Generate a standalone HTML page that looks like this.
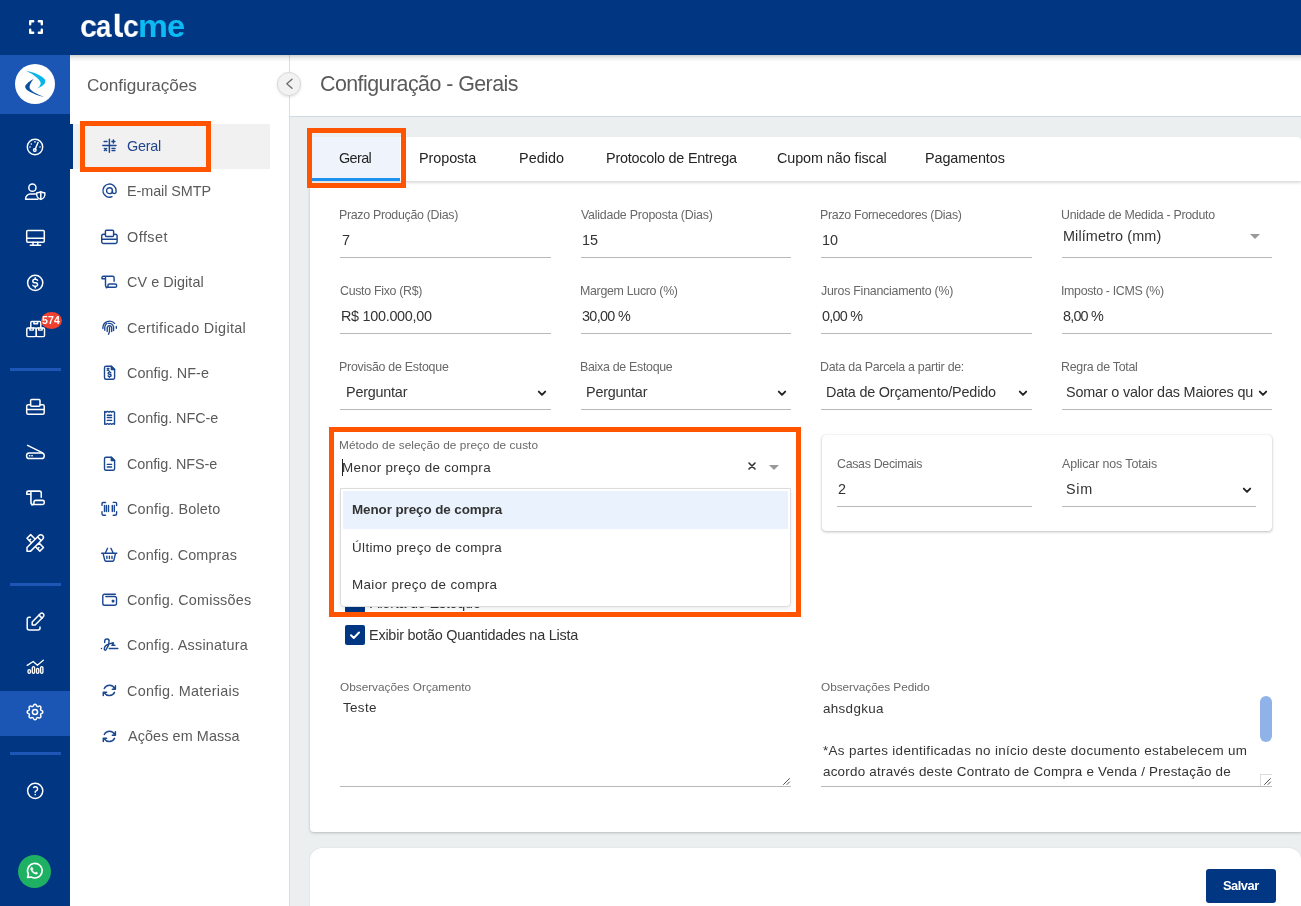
<!DOCTYPE html>
<html><head><meta charset="utf-8">
<style>
*{box-sizing:border-box;margin:0;padding:0}
html,body{width:1301px;height:906px;overflow:hidden;background:#ebeff0;font-family:"Liberation Sans",sans-serif;position:relative}
.a{position:absolute}
.t{position:absolute;white-space:nowrap;line-height:1;will-change:transform}
svg.a{overflow:visible}
</style></head>
<body>
<div class="a" style="left:0px;top:0px;width:1301px;height:55px;background:#003682;z-index:5"></div>
<div class="a" style="left:0px;top:55px;width:70px;height:851px;background:#003682;z-index:4"></div>
<div class="a" style="left:70px;top:55px;width:1231px;height:7px;background:linear-gradient(rgba(0,0,0,.19),rgba(0,0,0,.06) 45%,rgba(0,0,0,0));z-index:6"></div>
<div class="a" style="left:0px;top:55px;width:70px;height:59px;background:#1c56b5;z-index:4"></div>
<div class="a" style="left:0px;top:691px;width:70px;height:45px;background:#1c56b5;z-index:4"></div>
<div class="a" style="left:10px;top:368px;width:51px;height:3px;background:#1d56b4;z-index:4"></div>
<div class="a" style="left:10px;top:583px;width:51px;height:3px;background:#1d56b4;z-index:4"></div>
<div class="a" style="left:10px;top:752px;width:51px;height:3px;background:#1d56b4;z-index:4"></div>
<div class="a" style="left:70px;top:55px;width:220px;height:851px;background:#fff;z-index:3;border-right:1px solid #dcdcdc"></div>
<div class="a" style="left:290px;top:55px;width:1011px;height:62px;background:#fff;border-bottom:1px solid #cfdbe3"></div>
<svg class="a" style="left:28.8px;top:20px;z-index:6" width="14" height="14" viewBox="0 0 14 14" fill="none" stroke="#fff" stroke-width="2.4" stroke-linecap="round" stroke-linejoin="round"><path d="M1.2 4.2V1.2h3M9.8 1.2h3v3M12.8 9.8v3h-3M4.2 12.8h-3v-3"/></svg>
<svg class="a" style="left:0;top:0;z-index:6" width="200" height="50" viewBox="0 0 200 50"><path d="M114.8 13.8H119.5V30.8Q119.5 32.8 121.3 32.8H122.9V37.1H121Q114.8 37.1 114.8 30.8Z" fill="#fff"/></svg>
<div class="t" style="left:79.98px;top:11px;font-size:31.5px;font-weight:bold;color:#fff;transform:scaleX(0.969);transform-origin:0 0;z-index:6">c</div>
<div class="t" style="left:95.58px;top:11px;font-size:31.5px;font-weight:bold;color:#fff;transform:scaleX(0.872);transform-origin:0 0;z-index:6">a</div>
<div class="t" style="left:122.86px;top:11px;font-size:31.5px;font-weight:bold;color:#fff;transform:scaleX(0.903);transform-origin:0 0;z-index:6">c</div>
<div class="t" style="left:138.42px;top:11px;font-size:31.5px;font-weight:bold;color:#0cbaf4;transform:scaleX(1.067);transform-origin:0 0;z-index:6">m</div>
<div class="t" style="left:166.69px;top:11px;font-size:31.5px;font-weight:bold;color:#0cbaf4;transform:scaleX(1.038);transform-origin:0 0;z-index:6">e</div>
<div class="a" style="left:15px;top:64px;width:40px;height:40px;border-radius:50%;background:#fff;z-index:6"></div>
<svg class="a" style="left:15px;top:64px;z-index:7" width="40" height="40" viewBox="0 0 40 40"><path d="M10.5 6.5C18 8 26 11 29.5 15C31.5 17.5 30.5 21 22.1 24.6C26 21.5 26.5 19 24.5 16.5C22 13 16 9 10.5 6.5Z" fill="#0bb4e8"/><path d="M18.6 15C13 18 10 21 10.2 23C10.5 26 17 30 29.4 33.1C20 29.5 15.5 26.5 14.6 24C14.1 21.5 16 18 18.6 15Z" fill="#0a4fa0"/></svg>
<svg class="a" style="left:23.4px;top:134.8px;z-index:6" width="24" height="24" viewBox="0 0 24 24" fill="none" stroke="#fff" stroke-width="1.45" stroke-linecap="round" stroke-linejoin="round"><circle cx="12" cy="12" r="7.7"/><circle cx="11.8" cy="15.1" r="1.3"/><path d="M12.4 13.8L15 7.4"/><circle cx="8.3" cy="9" r=".8" fill="#fff" stroke="none"/><circle cx="12" cy="6.9" r=".8" fill="#fff" stroke="none"/><circle cx="7" cy="12" r=".8" fill="#fff" stroke="none"/><circle cx="17" cy="12" r=".8" fill="#fff" stroke="none"/></svg>
<svg class="a" style="left:23px;top:180px;z-index:6" width="24" height="24" viewBox="0 0 24 24" fill="none" stroke="#fff" stroke-width="1.5" stroke-linecap="round" stroke-linejoin="round"><circle cx="9.4" cy="7.7" r="3.6"/><path d="M12.6 14.1H7.3a4.7 4.7 0 0 0-4.7 4.7v.4h12.2"/><path d="M17.8 11.6c1.2.9 2.6 1.3 4 1.2c.6 3-1 5.8-4 6.6c-3-.8-4.6-3.6-4-6.6c1.4.1 2.8-.3 4-1.2z"/><path d="M17.8 12v7.2"/></svg>
<svg class="a" style="left:23px;top:226px;z-index:6" width="24" height="24" viewBox="0 0 24 24" fill="none" stroke="#fff" stroke-width="1.5" stroke-linecap="round" stroke-linejoin="round"><rect x="3.7" y="4.4" width="17.6" height="11.9" rx="1.2"/><path d="M3.7 12.3h17.6M10 16.3v2.9M14.7 16.3v2.9M7.3 19.3h10.3"/></svg>
<svg class="a" style="left:23px;top:271px;z-index:6" width="24" height="24" viewBox="0 0 24 24" fill="none" stroke="#fff" stroke-width="1.5" stroke-linecap="round" stroke-linejoin="round"><circle cx="12.2" cy="11.8" r="7.6"/><path d="M14.5 9.2a1.9 1.6 0 0 0-1.7-1h-1.2a1.75 1.75 0 0 0 0 3.5h1.2a1.75 1.75 0 0 1 0 3.5h-1.2a1.9 1.6 0 0 1-1.7-1M12.2 6.8v1.4M12.2 15.2v1.5"/></svg>
<svg class="a" style="left:23px;top:317px;z-index:6" width="24" height="24" viewBox="0 0 24 24" fill="none" stroke="#fff" stroke-width="1.45" stroke-linecap="round" stroke-linejoin="round"><path d="M7.8 10.8V5.4a.9.9 0 0 1 .9-.9h8.2a.9.9 0 0 1 .9.9v5.4M10.9 4.6v2.2h3.6V4.6"/><rect x="3.8" y="11" width="9.5" height="8.6" rx="1"/><rect x="13.3" y="11" width="8.2" height="8.6" rx="1"/><path d="M6.9 11v2.1h3.4V11M15.7 11v2.1h3.4V11"/></svg>
<div class="a" style="left:41px;top:312px;width:21px;height:17px;border-radius:50%;background:#ef4030;z-index:7"></div>
<div class="t" style="left:42.17px;top:315.00px;font-size:10.6px;color:#fff;letter-spacing:0.092px;font-weight:bold;z-index:8">574</div>
<svg class="a" style="left:23px;top:395px;z-index:6" width="24" height="24" viewBox="0 0 24 24" fill="none" stroke="#fff" stroke-width="1.5" stroke-linecap="round" stroke-linejoin="round"><rect x="7.6" y="4.6" width="9.4" height="6.7" rx="1"/><path d="M7.6 9.8H5.2a1.5 1.5 0 0 0-1.5 1.5v6.5a1.5 1.5 0 0 0 1.5 1.5h14.5a1.5 1.5 0 0 0 1.5-1.5v-6.5a1.5 1.5 0 0 0-1.5-1.5H17M3.7 14.5h17.5"/></svg>
<svg class="a" style="left:23px;top:440px;z-index:6" width="24" height="24" viewBox="0 0 24 24" fill="none" stroke="#fff" stroke-width="1.5" stroke-linecap="round" stroke-linejoin="round"><path d="M4.6 5.4l14.6 7.3"/><rect x="3.6" y="13" width="17.6" height="5.6" rx="2.6"/><path d="M6.5 15.8h.3M8.9 15.8h.3"/></svg>
<svg class="a" style="left:23px;top:486px;z-index:6" width="24" height="24" viewBox="0 0 24 24" fill="none" stroke="#fff" stroke-width="1.3" stroke-linecap="round" stroke-linejoin="round"><g transform="translate(12.5 11.8) scale(1.2) translate(-11.3 -11.75)"><path d="M4 8.8V7.6a1.4 1.4 0 0 1 1.4-1.4h9.2a1.5 1.5 0 0 1 1.5 1.5v3.6M7.5 7.4v8.2a1.7 1.7 0 0 0 1.7 1.7h8a1.4 1.4 0 0 0 1.4-1.4v-.6a1.4 1.4 0 0 0-1.4-1.4h-5.8a1.4 1.4 0 0 0-1.4 1.4v.7a1.7 1.7 0 0 1-1.7 1.7M4 8.8h3.4"/></g></svg>
<svg class="a" style="left:23px;top:531px;z-index:6" width="24" height="24" viewBox="0 0 24 24" fill="none" stroke="#fff" stroke-width="1.65" stroke-linecap="round" stroke-linejoin="round"><g transform="translate(12.25 11.9) scale(0.917) translate(-12 -12)"><path d="M3 21h4l13-13a1.5 1.5 0 0 0-4-4l-13 13v4M14.5 5.5l4 4M12 8l-5-5-4 4 5 5M7 8l-1.5 1.5M16 12l5 5-4 4-5-5M16 17l-1.5 1.5"/></g></svg>
<svg class="a" style="left:23px;top:610px;z-index:6" width="24" height="24" viewBox="0 0 24 24" fill="none" stroke="#fff" stroke-width="1.5" stroke-linecap="round" stroke-linejoin="round"><path d="M7.3 7.2H6.2a2 2 0 0 0-2 2v8.7a2 2 0 0 0 2 2h8.8a2 2 0 0 0 2-2v-1"/><path d="M20.3 6.8a2.1 2.1 0 0 0-3-3L9.2 12v3h3z"/><path d="M16 5.1l3 3"/></svg>
<svg class="a" style="left:23px;top:655px;z-index:6" width="24" height="24" viewBox="0 0 24 24" fill="none" stroke="#fff" stroke-width="1.35" stroke-linecap="round" stroke-linejoin="round"><path d="M4.2 10.4L10.2 6.5l4.2 3.8 5.9-5"/><rect x="5" y="14.6" width="2.4" height="3.7" rx="1.2"/><rect x="9.3" y="11.6" width="2.3" height="6.7" rx="1.15"/><rect x="13.5" y="13.3" width="2.3" height="5" rx="1.15"/><rect x="17.6" y="11.6" width="2.3" height="6.7" rx="1.15"/></svg>
<svg class="a" style="left:23px;top:700px;z-index:6" width="24" height="24" viewBox="0 0 24 24" fill="none" stroke="#fff" stroke-width="1.75" stroke-linecap="round" stroke-linejoin="round"><g transform="translate(12 12) scale(0.86) translate(-12 -12)"><path d="M10.3 4.3c.4-1.8 3-1.8 3.4 0a1.7 1.7 0 0 0 2.6 1.1c1.5-.9 3.3.8 2.4 2.4a1.7 1.7 0 0 0 1 2.5c1.9.4 1.9 3 0 3.4a1.7 1.7 0 0 0-1 2.6c.9 1.5-.9 3.3-2.4 2.4a1.7 1.7 0 0 0-2.6 1c-.4 1.9-3 1.9-3.4 0a1.7 1.7 0 0 0-2.6-1c-1.5.9-3.3-.9-2.4-2.4a1.7 1.7 0 0 0-1-2.6c-1.9-.4-1.9-3 0-3.4a1.7 1.7 0 0 0 1-2.5c-.9-1.6.9-3.3 2.4-2.4 1 .6 2.3.1 2.6-1.1z"/><circle cx="12" cy="12" r="3"/></g></svg>
<svg class="a" style="left:23px;top:779px;z-index:6" width="24" height="24" viewBox="0 0 24 24" fill="none" stroke="#fff" stroke-width="1.5" stroke-linecap="round" stroke-linejoin="round"><circle cx="12.2" cy="11.8" r="7.6"/><path d="M12.2 15.6v.05M12.2 13.2a1.3 1.3 0 0 1 .9-1.3a2.2 2.2 0 1 0-2.5-3.4"/></svg>
<div class="a" style="left:17.7px;top:854.9px;width:33px;height:33px;border-radius:50%;background:#1eb164;z-index:6"></div>
<svg class="a" style="left:22.2px;top:859.4px;z-index:7" width="24" height="24" viewBox="0 0 24 24" fill="none" stroke="#fff" stroke-width="1.6" stroke-linecap="round" stroke-linejoin="round"><path d="M5.5 18.5l1-3.2A7.3 7.3 0 1 1 9.2 18z" stroke-width="1.6"/><path d="M9.3 8.4c-.4.3-.8.9-.6 1.8.5 2 2.6 4.3 4.9 4.9.9.2 1.5-.2 1.8-.6l.2-.6-1.7-.9-.8.8c-1-.4-2.4-1.7-2.8-2.8l.8-.8-.9-1.7z" fill="#fff" stroke="#fff" stroke-width=".6"/></svg>
<div class="t" style="left:87.40px;top:77.00px;font-size:17.2px;color:#5c5c5c;letter-spacing:-0.078px;z-index:4">Configurações</div>
<div class="a" style="left:276.5px;top:72px;width:24px;height:24px;border-radius:50%;background:#f2f2f2;border:1px solid #dadada;box-shadow:0 1px 3px rgba(0,0,0,.12);z-index:6"></div>
<svg class="a" style="left:282.5px;top:78px;z-index:7" width="12" height="12" viewBox="0 0 12 12" fill="none" stroke="#6e6e6e" stroke-width="1.4" stroke-linecap="round" stroke-linejoin="round"><path d="M9 1.2L3.8 5.7 9 10.2"/></svg>
<div class="a" style="left:70px;top:124px;width:200px;height:45px;background:#f1f1f1;z-index:4"></div>
<div class="a" style="left:70px;top:124px;width:3px;height:45px;background:#003682;z-index:5"></div>
<div class="t" style="left:127.04px;top:139.00px;font-size:14.4px;color:#22468e;letter-spacing:-0.225px;z-index:5">Geral</div>
<div class="t" style="left:126.59px;top:184.00px;font-size:14.4px;color:#5a5a5a;letter-spacing:-0.072px;z-index:5">E-mail SMTP</div>
<div class="t" style="left:127.06px;top:230.00px;font-size:14.4px;color:#5a5a5a;letter-spacing:0.476px;z-index:5">Offset</div>
<div class="t" style="left:127.02px;top:275.00px;font-size:14.4px;color:#5a5a5a;letter-spacing:0.060px;z-index:5">CV e Digital</div>
<div class="t" style="left:127.02px;top:321.00px;font-size:14.4px;color:#5a5a5a;letter-spacing:0.335px;z-index:5">Certificado Digital</div>
<div class="t" style="left:127.02px;top:366.00px;font-size:14.4px;color:#5a5a5a;letter-spacing:0.030px;z-index:5">Config. NF-e</div>
<div class="t" style="left:127.02px;top:411.00px;font-size:14.4px;color:#5a5a5a;letter-spacing:-0.064px;z-index:5">Config. NFC-e</div>
<div class="t" style="left:127.02px;top:457.00px;font-size:14.4px;color:#5a5a5a;letter-spacing:-0.069px;z-index:5">Config. NFS-e</div>
<div class="t" style="left:127.02px;top:502.00px;font-size:14.4px;color:#5a5a5a;letter-spacing:0.224px;z-index:5">Config. Boleto</div>
<div class="t" style="left:127.02px;top:548.00px;font-size:14.4px;color:#5a5a5a;letter-spacing:0.133px;z-index:5">Config. Compras</div>
<div class="t" style="left:127.02px;top:593.00px;font-size:14.4px;color:#5a5a5a;letter-spacing:0.209px;z-index:5">Config. Comissões</div>
<div class="t" style="left:127.02px;top:638.00px;font-size:14.4px;color:#5a5a5a;letter-spacing:0.237px;z-index:5">Config. Assinatura</div>
<div class="t" style="left:127.02px;top:684.00px;font-size:14.4px;color:#5a5a5a;letter-spacing:0.260px;z-index:5">Config. Materiais</div>
<div class="t" style="left:127.55px;top:729.00px;font-size:14.4px;color:#5a5a5a;letter-spacing:0.093px;z-index:5">Ações em Massa</div>
<svg class="a" style="left:98px;top:134px;z-index:5" width="24" height="24" viewBox="0 0 24 24" fill="none" stroke="#1b4791" stroke-width="1.45" stroke-linecap="round" stroke-linejoin="round"><path d="M11.4 5.3v13M4.8 11.5H18M6.1 7.5H9M13.9 7.5h3M15.4 6v3M6.4 14.4l2.2 2.2M8.6 14.4l-2.2 2.2M14 14.4h3M14 16.6h3"/></svg>
<svg class="a" style="left:98px;top:179px;z-index:5" width="24" height="24" viewBox="0 0 24 24" fill="none" stroke="#1b4791" stroke-width="1.9" stroke-linecap="round" stroke-linejoin="round"><g transform="translate(11.5 11.65) scale(0.733) translate(-12 -12)"><circle cx="12" cy="12" r="4"/><path d="M16 12v1.5a2.5 2.5 0 0 0 5 0V12a9 9 0 1 0-5.5 8.28"/></g></svg>
<svg class="a" style="left:98px;top:225px;z-index:5" width="24" height="24" viewBox="0 0 24 24" fill="none" stroke="#1b4791" stroke-width="1.45" stroke-linecap="round" stroke-linejoin="round"><rect x="7.4" y="5.2" width="8.2" height="6.2" rx="1"/><path d="M7.4 9.2H5.5a1.8 1.8 0 0 0-1.8 1.8v5.7a1.8 1.8 0 0 0 1.8 1.8h11.8a1.8 1.8 0 0 0 1.8-1.8V11a1.8 1.8 0 0 0-1.8-1.8h-1.7M3.7 14.3h15.4"/></svg>
<svg class="a" style="left:98px;top:270px;z-index:5" width="24" height="24" viewBox="0 0 24 24" fill="none" stroke="#1b4791" stroke-width="1.45" stroke-linecap="round" stroke-linejoin="round"><path d="M4 8.8V7.6a1.4 1.4 0 0 1 1.4-1.4h9.2a1.5 1.5 0 0 1 1.5 1.5v3.6M7.5 7.4v8.2a1.7 1.7 0 0 0 1.7 1.7h8a1.4 1.4 0 0 0 1.4-1.4v-.6a1.4 1.4 0 0 0-1.4-1.4h-5.8a1.4 1.4 0 0 0-1.4 1.4v.7a1.7 1.7 0 0 1-1.7 1.7M4 8.8h3.4"/></svg>
<svg class="a" style="left:98px;top:316px;z-index:5" width="24" height="24" viewBox="0 0 24 24" fill="none" stroke="#1b4791" stroke-width="1.35" stroke-linecap="round" stroke-linejoin="round"><path d="M4.9 12.5v-.7a6.7 6.7 0 0 1 11.7-4.4M18.3 10.3v2M6.8 14.3v-3.1a4.6 4.6 0 0 1 1.7-3.5M10.2 7.4a4.6 4.6 0 0 1 5.4 3.6v3.6M9.2 15.4v-3.8a2.3 2.3 0 0 1 4.5 0v3.9M11.5 11.5v4l-1 2.7"/></svg>
<svg class="a" style="left:98px;top:361px;z-index:5" width="24" height="24" viewBox="0 0 24 24" fill="none" stroke="#1b4791" stroke-width="1.4" stroke-linecap="round" stroke-linejoin="round"><path d="M13.3 5.2H8a1.5 1.5 0 0 0-1.5 1.5v10.1A1.5 1.5 0 0 0 8 18.3h7.1a1.5 1.5 0 0 0 1.5-1.5V8.5z"/><path d="M13.3 5.2v3.3h3.3z" fill="#1b4791"/><path d="M9.2 7.5h1.7M9.2 9.3h1.7M12.8 11.8a1.2 1 0 0 0-1.2-.7h-.4a1.1 1.1 0 0 0 0 2.2h.8a1.1 1.1 0 0 1 0 2.2h-.6a1.2 1 0 0 1-1.3-.7M11.4 10.4v.7M11.4 15.5v.7"/></svg>
<svg class="a" style="left:98px;top:406px;z-index:5" width="24" height="24" viewBox="0 0 24 24" fill="none" stroke="#1b4791" stroke-width="1.4" stroke-linecap="round" stroke-linejoin="round"><path d="M6.7 18.3V5.4l1.4.8 1.4-.8 1.4.8 1.4-.8 1.4.8 1.4-.8 1.4.8V18.3l-1.4-.8-1.4.8-1.4-.8-1.4.8-1.4-.8-1.4.8-1.4-.8z"/><path d="M9.3 9.3h4.3M9.3 11.5h4.3M9.3 14.4h4.3"/></svg>
<svg class="a" style="left:98px;top:452px;z-index:5" width="24" height="24" viewBox="0 0 24 24" fill="none" stroke="#1b4791" stroke-width="1.4" stroke-linecap="round" stroke-linejoin="round"><path d="M13.3 5.2H8a1.5 1.5 0 0 0-1.5 1.5v10.1A1.5 1.5 0 0 0 8 18.3h7.1a1.5 1.5 0 0 0 1.5-1.5V8.5z"/><path d="M13.3 5.2v3.3h3.3z" fill="#1b4791"/><path d="M9.3 12.4h4.3M9.3 15h4.3"/></svg>
<svg class="a" style="left:98px;top:497px;z-index:5" width="24" height="24" viewBox="0 0 24 24" fill="none" stroke="#1b4791" stroke-width="1.4" stroke-linecap="round" stroke-linejoin="round"><path d="M4 8.4V6.5a1 1 0 0 1 1-1h2.5M15.2 5.4h2.4a1 1 0 0 1 1 1v2.1M4 14.6v2.2a1.5 1.5 0 0 0 1.5 1.5h2M18.6 14.6v2.2a1.5 1.5 0 0 1-1.5 1.5h-1.9M6.5 8.5v6M8.4 8.5v6M10.5 8.5v6M14.3 8.5v6M16.3 8.5v6"/></svg>
<svg class="a" style="left:98px;top:543px;z-index:5" width="24" height="24" viewBox="0 0 24 24" fill="none" stroke="#1b4791" stroke-width="1.4" stroke-linecap="round" stroke-linejoin="round"><path d="M3.7 10.3h15.1M7.4 9.8l2.2-4.5M15.1 9.8l-2.2-4.5M5.2 10.8l1.5 6.2a1.5 1.5 0 0 0 1.4 1.2h6.4a1.5 1.5 0 0 0 1.4-1.2l1.5-6.2M8.9 13.1v2.5M11.4 13.1v2.5M14 13.1v2.5"/></svg>
<svg class="a" style="left:98px;top:588px;z-index:5" width="24" height="24" viewBox="0 0 24 24" fill="none" stroke="#1b4791" stroke-width="1.4" stroke-linecap="round" stroke-linejoin="round"><path d="M17.4 6.3H6.5a1.7 1.7 0 0 0-1.7 1.7v7.5a1.8 1.8 0 0 0 1.8 1.8h10.1a1.8 1.8 0 0 0 1.8-1.8v-5.2a1.8 1.8 0 0 0-1.8-1.8H7.8"/><rect x="14.4" y="12.4" width="1.3" height="1.3" fill="#1b4791"/></svg>
<svg class="a" style="left:98px;top:633px;z-index:5" width="24" height="24" viewBox="0 0 24 24" fill="none" stroke="#1b4791" stroke-width="1.4" stroke-linecap="round" stroke-linejoin="round"><path d="M6.7 9.5V8a2.2 2.2 0 0 1 4.4.3c0 3-1.5 6.5-3 8.3-.8 1-1.8.7-1.8-.5 0-2.4 2-4.3 4.5-4.9 1.8-.5 3.3-1.5 4.4-1.5.5 0 .2 1.4-1.3 2.6h3M11.3 15.5h8.5M3.4 15.5h.1"/></svg>
<svg class="a" style="left:98px;top:679px;z-index:5" width="24" height="24" viewBox="0 0 24 24" fill="none" stroke="#1b4791" stroke-width="1.5" stroke-linecap="round" stroke-linejoin="round"><path d="M6.3 9.5a5.8 5.8 0 0 1 10.4.2M17.4 6.8v3.5h-3.1M16.5 13.3a5.8 5.8 0 0 1-10 .7M5.3 16.5v-3.2h3.3"/></svg>
<svg class="a" style="left:98px;top:724.5px;z-index:5" width="24" height="24" viewBox="0 0 24 24" fill="none" stroke="#1b4791" stroke-width="1.5" stroke-linecap="round" stroke-linejoin="round"><path d="M6.3 9.5a5.8 5.8 0 0 1 10.4.2M17.4 6.8v3.5h-3.1M16.5 13.3a5.8 5.8 0 0 1-10 .7M5.3 16.5v-3.2h3.3"/></svg>
<div class="a" style="left:80px;top:121px;width:131px;height:51px;border:5px solid #ff5400;z-index:20"></div>
<div class="t" style="left:319.95px;top:74.00px;font-size:21.4px;color:#5a5a5a;letter-spacing:-0.540px;z-index:2">Configuração - Gerais</div>
<div class="a" style="left:310px;top:137px;width:991px;height:44px;background:#fff;border-radius:4px 4px 0 0;box-shadow:0 2px 3px rgba(0,0,0,.14);z-index:2"></div>
<div class="a" style="left:310px;top:181px;width:993px;height:651px;background:#fff;border-radius:0 0 4px 4px;box-shadow:0 1px 3px rgba(0,0,0,.22)"></div>
<div class="a" style="left:310px;top:848px;width:991px;height:70px;background:#fff;border-radius:12px;box-shadow:0 0 2px rgba(0,0,0,.1)"></div>
<div class="a" style="left:312px;top:137px;width:88px;height:44px;background:#eff4fc;z-index:3"></div>
<div class="a" style="left:312px;top:178px;width:88px;height:3px;background:#1e90f0;z-index:3"></div>
<div class="t" style="left:339.04px;top:151.00px;font-size:14.4px;color:#242424;letter-spacing:-0.600px;z-index:4">Geral</div>
<div class="t" style="left:418.99px;top:151.00px;font-size:14.4px;color:#242424;letter-spacing:-0.062px;z-index:4">Proposta</div>
<div class="t" style="left:519.19px;top:151.00px;font-size:14.4px;color:#242424;letter-spacing:0.032px;z-index:4">Pedido</div>
<div class="t" style="left:605.79px;top:151.00px;font-size:14.4px;color:#242424;letter-spacing:-0.223px;z-index:4">Protocolo de Entrega</div>
<div class="t" style="left:776.82px;top:151.00px;font-size:14.4px;color:#242424;letter-spacing:-0.092px;z-index:4">Cupom não fiscal</div>
<div class="t" style="left:925.19px;top:151.00px;font-size:14.4px;color:#242424;letter-spacing:-0.106px;z-index:4">Pagamentos</div>
<div class="a" style="left:307px;top:128px;width:99px;height:60px;border:5px solid #ff5400;z-index:20"></div>
<div class="t" style="left:339.48px;top:209.00px;font-size:12.4px;color:#686868;letter-spacing:-0.303px;z-index:3">Prazo Produção (Dias)</div>
<div class="t" style="left:580.74px;top:209.00px;font-size:12.4px;color:#686868;letter-spacing:-0.220px;z-index:3">Validade Proposta (Dias)</div>
<div class="t" style="left:820.18px;top:209.00px;font-size:12.4px;color:#686868;letter-spacing:-0.283px;z-index:3">Prazo Fornecedores (Dias)</div>
<div class="t" style="left:1060.80px;top:209.00px;font-size:12.4px;color:#686868;letter-spacing:-0.301px;z-index:3">Unidade de Medida - Produto</div>
<div class="t" style="left:341.76px;top:233.00px;font-size:14.4px;color:#333333;letter-spacing:0.000px;z-index:3">7</div>
<div class="t" style="left:582.09px;top:233.00px;font-size:14.4px;color:#333333;letter-spacing:0.000px;z-index:3">15</div>
<div class="t" style="left:821.89px;top:233.00px;font-size:14.4px;color:#333333;letter-spacing:0.000px;z-index:3">10</div>
<div class="t" style="left:1062.59px;top:229.00px;font-size:14.4px;color:#333333;letter-spacing:0.116px;z-index:3">Milímetro (mm)</div>
<svg class="a" style="left:1250px;top:234px;z-index:4" width="10" height="10" viewBox="0 0 10 10" fill="none" stroke="none" stroke-width="2" stroke-linecap="round" stroke-linejoin="round"><path d="M0 0h10L5 5z" fill="#999" stroke="none"/></svg>
<div class="a" style="left:340px;top:257px;width:211px;height:1px;background:#b8b8b8;z-index:3"></div>
<div class="a" style="left:581px;top:257px;width:210px;height:1px;background:#b8b8b8;z-index:3"></div>
<div class="a" style="left:821px;top:257px;width:211px;height:1px;background:#b8b8b8;z-index:3"></div>
<div class="a" style="left:1062px;top:257px;width:210px;height:1px;background:#b8b8b8;z-index:3"></div>
<div class="t" style="left:339.84px;top:285.00px;font-size:12.4px;color:#686868;letter-spacing:-0.312px;z-index:3">Custo Fixo (R$)</div>
<div class="t" style="left:579.98px;top:285.00px;font-size:12.4px;color:#686868;letter-spacing:-0.307px;z-index:3">Margem Lucro (%)</div>
<div class="t" style="left:820.64px;top:285.00px;font-size:12.4px;color:#686868;letter-spacing:-0.242px;z-index:3">Juros Financiamento (%)</div>
<div class="t" style="left:1060.64px;top:285.00px;font-size:12.4px;color:#686868;letter-spacing:-0.339px;z-index:3">Imposto - ICMS (%)</div>
<div class="t" style="left:340.79px;top:309.00px;font-size:14.4px;color:#333333;letter-spacing:-0.286px;z-index:3">R$ 100.000,00</div>
<div class="t" style="left:581.87px;top:309.00px;font-size:14.4px;color:#333333;letter-spacing:-0.682px;z-index:3">30,00 %</div>
<div class="t" style="left:822.38px;top:309.00px;font-size:14.4px;color:#333333;letter-spacing:-0.729px;z-index:3">0,00 %</div>
<div class="t" style="left:1063.11px;top:309.00px;font-size:14.4px;color:#333333;letter-spacing:-0.797px;z-index:3">8,00 %</div>
<div class="a" style="left:340px;top:333px;width:211px;height:1px;background:#b8b8b8;z-index:3"></div>
<div class="a" style="left:581px;top:333px;width:210px;height:1px;background:#b8b8b8;z-index:3"></div>
<div class="a" style="left:821px;top:333px;width:211px;height:1px;background:#b8b8b8;z-index:3"></div>
<div class="a" style="left:1062px;top:333px;width:210px;height:1px;background:#b8b8b8;z-index:3"></div>
<div class="t" style="left:339.48px;top:361.00px;font-size:12.4px;color:#686868;letter-spacing:-0.253px;z-index:3">Provisão de Estoque</div>
<div class="t" style="left:579.98px;top:361.00px;font-size:12.4px;color:#686868;letter-spacing:-0.293px;z-index:3">Baixa de Estoque</div>
<div class="t" style="left:820.18px;top:361.00px;font-size:12.4px;color:#686868;letter-spacing:-0.267px;z-index:3">Data da Parcela a partir de:</div>
<div class="t" style="left:1060.78px;top:361.00px;font-size:12.4px;color:#686868;letter-spacing:-0.272px;z-index:3">Regra de Total</div>
<div class="t" style="left:345.59px;top:385.00px;font-size:14.4px;color:#333333;letter-spacing:-0.222px;z-index:3">Perguntar</div>
<div class="t" style="left:585.79px;top:385.00px;font-size:14.4px;color:#333333;letter-spacing:-0.222px;z-index:3">Perguntar</div>
<div class="t" style="left:826.49px;top:385.00px;font-size:14.4px;color:#333333;letter-spacing:-0.193px;z-index:3">Data de Orçamento/Pedido</div>
<div class="t" style="left:1066.42px;top:385.00px;font-size:14.4px;color:#333333;letter-spacing:-0.175px;z-index:3">Somar o valor das Maiores qu</div>
<svg class="a" style="left:536.6px;top:388px;z-index:4" width="10" height="10" viewBox="0 0 10 10" fill="none" stroke="#222" stroke-width="1.9" stroke-linecap="round" stroke-linejoin="round"><path d="M1.8 3.6L5 6.8l3.2-3.2"/></svg>
<svg class="a" style="left:777px;top:388px;z-index:4" width="10" height="10" viewBox="0 0 10 10" fill="none" stroke="#222" stroke-width="1.9" stroke-linecap="round" stroke-linejoin="round"><path d="M1.8 3.6L5 6.8l3.2-3.2"/></svg>
<svg class="a" style="left:1017.6px;top:388px;z-index:4" width="10" height="10" viewBox="0 0 10 10" fill="none" stroke="#222" stroke-width="1.9" stroke-linecap="round" stroke-linejoin="round"><path d="M1.8 3.6L5 6.8l3.2-3.2"/></svg>
<svg class="a" style="left:1257.5px;top:388px;z-index:4" width="10" height="10" viewBox="0 0 10 10" fill="none" stroke="#222" stroke-width="1.9" stroke-linecap="round" stroke-linejoin="round"><path d="M1.8 3.6L5 6.8l3.2-3.2"/></svg>
<div class="a" style="left:340px;top:409px;width:211px;height:1px;background:#b8b8b8;z-index:3"></div>
<div class="a" style="left:581px;top:409px;width:210px;height:1px;background:#b8b8b8;z-index:3"></div>
<div class="a" style="left:821px;top:409px;width:211px;height:1px;background:#b8b8b8;z-index:3"></div>
<div class="a" style="left:1062px;top:409px;width:210px;height:1px;background:#b8b8b8;z-index:3"></div>
<div class="t" style="left:339.40px;top:440.00px;font-size:11.8px;color:#686868;letter-spacing:0.067px;z-index:3">Método de seleção de preço de custo</div>
<div class="a" style="left:342px;top:459px;width:1px;height:16.5px;background:#222;z-index:3"></div>
<div class="t" style="left:342.09px;top:461.00px;font-size:13.4px;color:#333333;letter-spacing:0.321px;z-index:3">Menor preço de compra</div>
<svg class="a" style="left:747.5px;top:462px;z-index:4" width="8" height="8" viewBox="0 0 8 8" fill="none" stroke="#333" stroke-width="1.6" stroke-linecap="round" stroke-linejoin="round"><path d="M1 1l6 6M7 1L1 7"/></svg>
<svg class="a" style="left:769px;top:464.8px;z-index:4" width="10" height="10" viewBox="0 0 10 10" fill="none" stroke="none" stroke-width="2" stroke-linecap="round" stroke-linejoin="round"><path d="M0 0h10L5 5z" fill="#999" stroke="none"/></svg>
<div class="a" style="left:345px;top:593px;width:20px;height:20px;background:#003682;border-radius:2px;z-index:3"></div>
<div class="t" style="left:370.35px;top:596.00px;font-size:14.4px;color:#333333;letter-spacing:-0.218px;z-index:3">Alerta de Estoque</div>
<div class="a" style="left:345px;top:625px;width:20px;height:20px;background:#003682;border-radius:2px;z-index:3"></div>
<svg class="a" style="left:349px;top:629px;z-index:4" width="12" height="12" viewBox="0 0 12 12" fill="none" stroke="#fff" stroke-width="2" stroke-linecap="round" stroke-linejoin="round"><path d="M2 6.2l2.8 2.8L10 3.5"/></svg>
<div class="t" style="left:369.39px;top:628.00px;font-size:14.4px;color:#333333;letter-spacing:-0.209px;z-index:3">Exibir botão Quantidades na Lista</div>
<div class="a" style="left:340px;top:488px;width:451px;height:119px;background:#fff;border:1px solid #dcdcdc;border-radius:0 0 4px 4px;box-shadow:0 2px 4px rgba(0,0,0,.08);z-index:10"></div>
<div class="a" style="left:343px;top:491px;width:445px;height:38px;background:#eaf3fd;z-index:11"></div>
<div class="t" style="left:352.20px;top:503.00px;font-size:13.4px;color:#333333;letter-spacing:-0.074px;font-weight:bold;z-index:12">Menor preço de compra</div>
<div class="t" style="left:352.16px;top:541.00px;font-size:13.4px;color:#333333;letter-spacing:0.365px;z-index:12">Último preço de compra</div>
<div class="t" style="left:352.09px;top:578.00px;font-size:13.4px;color:#333333;letter-spacing:0.365px;z-index:12">Maior preço de compra</div>
<div class="a" style="left:329px;top:427px;width:472px;height:190px;border:5px solid #ff5400;z-index:20"></div>
<div class="a" style="left:821.5px;top:434.5px;width:450px;height:96.5px;background:#fff;border-radius:4px;box-shadow:0 1px 3px rgba(0,0,0,.25),0 0 1px rgba(0,0,0,.15);z-index:3"></div>
<div class="t" style="left:836.74px;top:458.00px;font-size:12.4px;color:#686868;letter-spacing:-0.314px;z-index:4">Casas Decimais</div>
<div class="t" style="left:1061.55px;top:458.00px;font-size:12.4px;color:#686868;letter-spacing:-0.098px;z-index:4">Aplicar nos Totais</div>
<div class="t" style="left:838.48px;top:482.00px;font-size:14.4px;color:#333333;letter-spacing:0.000px;z-index:4">2</div>
<div class="t" style="left:1066.42px;top:482.00px;font-size:14.4px;color:#333333;letter-spacing:0.748px;z-index:4">Sim</div>
<svg class="a" style="left:1241.8px;top:484.6px;z-index:4" width="10" height="10" viewBox="0 0 10 10" fill="none" stroke="#222" stroke-width="1.9" stroke-linecap="round" stroke-linejoin="round"><path d="M1.8 3.6L5 6.8l3.2-3.2"/></svg>
<div class="a" style="left:837px;top:506px;width:195px;height:1px;background:#b8b8b8;z-index:4"></div>
<div class="a" style="left:1062px;top:506px;width:194px;height:1px;background:#b8b8b8;z-index:4"></div>
<div class="t" style="left:339.98px;top:682.00px;font-size:11.8px;color:#686868;letter-spacing:0.000px;z-index:3">Observações Orçamento</div>
<div class="t" style="left:343.29px;top:701.00px;font-size:13.4px;color:#333333;letter-spacing:0.349px;z-index:3">Teste</div>
<div class="a" style="left:340px;top:786px;width:451px;height:1px;background:#b8b8b8;z-index:3"></div>
<svg class="a" style="left:779px;top:774px;z-index:4" width="12" height="12" viewBox="0 0 12 12" fill="none" stroke="#555" stroke-width="1" stroke-linecap="round" stroke-linejoin="round"><path d="M10.5 4.5l-6 6M10.5 8l-2.5 2.5"/></svg>
<div class="t" style="left:821.08px;top:682.00px;font-size:11.8px;color:#686868;letter-spacing:-0.034px;z-index:3">Observações Pedido</div>
<div class="t" style="left:823.08px;top:702.00px;font-size:13.4px;color:#333333;letter-spacing:0.337px;z-index:3">ahsdgkua</div>
<div class="t" style="left:822.93px;top:744.00px;font-size:13.4px;color:#333333;letter-spacing:0.344px;z-index:3">*As partes identificadas no início deste documento estabelecem um</div>
<div class="t" style="left:822.88px;top:765.00px;font-size:13.4px;color:#333333;letter-spacing:0.240px;z-index:3">acordo através deste Contrato de Compra e Venda / Prestação de</div>
<div class="a" style="left:821px;top:786px;width:451px;height:1px;background:#b8b8b8;z-index:3"></div>
<div class="a" style="left:1260px;top:696px;width:12px;height:46px;background:#8fb3e8;border-radius:6px;z-index:4"></div>
<div class="a" style="left:1260px;top:774px;width:12px;height:12px;background:#fff;border-left:1px solid #ddd;border-top:1px solid #ddd;z-index:4"></div>
<svg class="a" style="left:1260px;top:774px;z-index:5" width="12" height="12" viewBox="0 0 12 12" fill="none" stroke="#555" stroke-width="1" stroke-linecap="round" stroke-linejoin="round"><path d="M10.5 4.5l-6 6M10.5 8l-2.5 2.5"/></svg>
<div class="a" style="left:1206px;top:869px;width:70px;height:34px;background:#003682;border-radius:3px;z-index:3"></div>
<div class="t" style="left:1222.67px;top:880.00px;font-size:12.9px;color:#fff;letter-spacing:-0.502px;font-weight:bold;z-index:4">Salvar</div>
</body></html>
